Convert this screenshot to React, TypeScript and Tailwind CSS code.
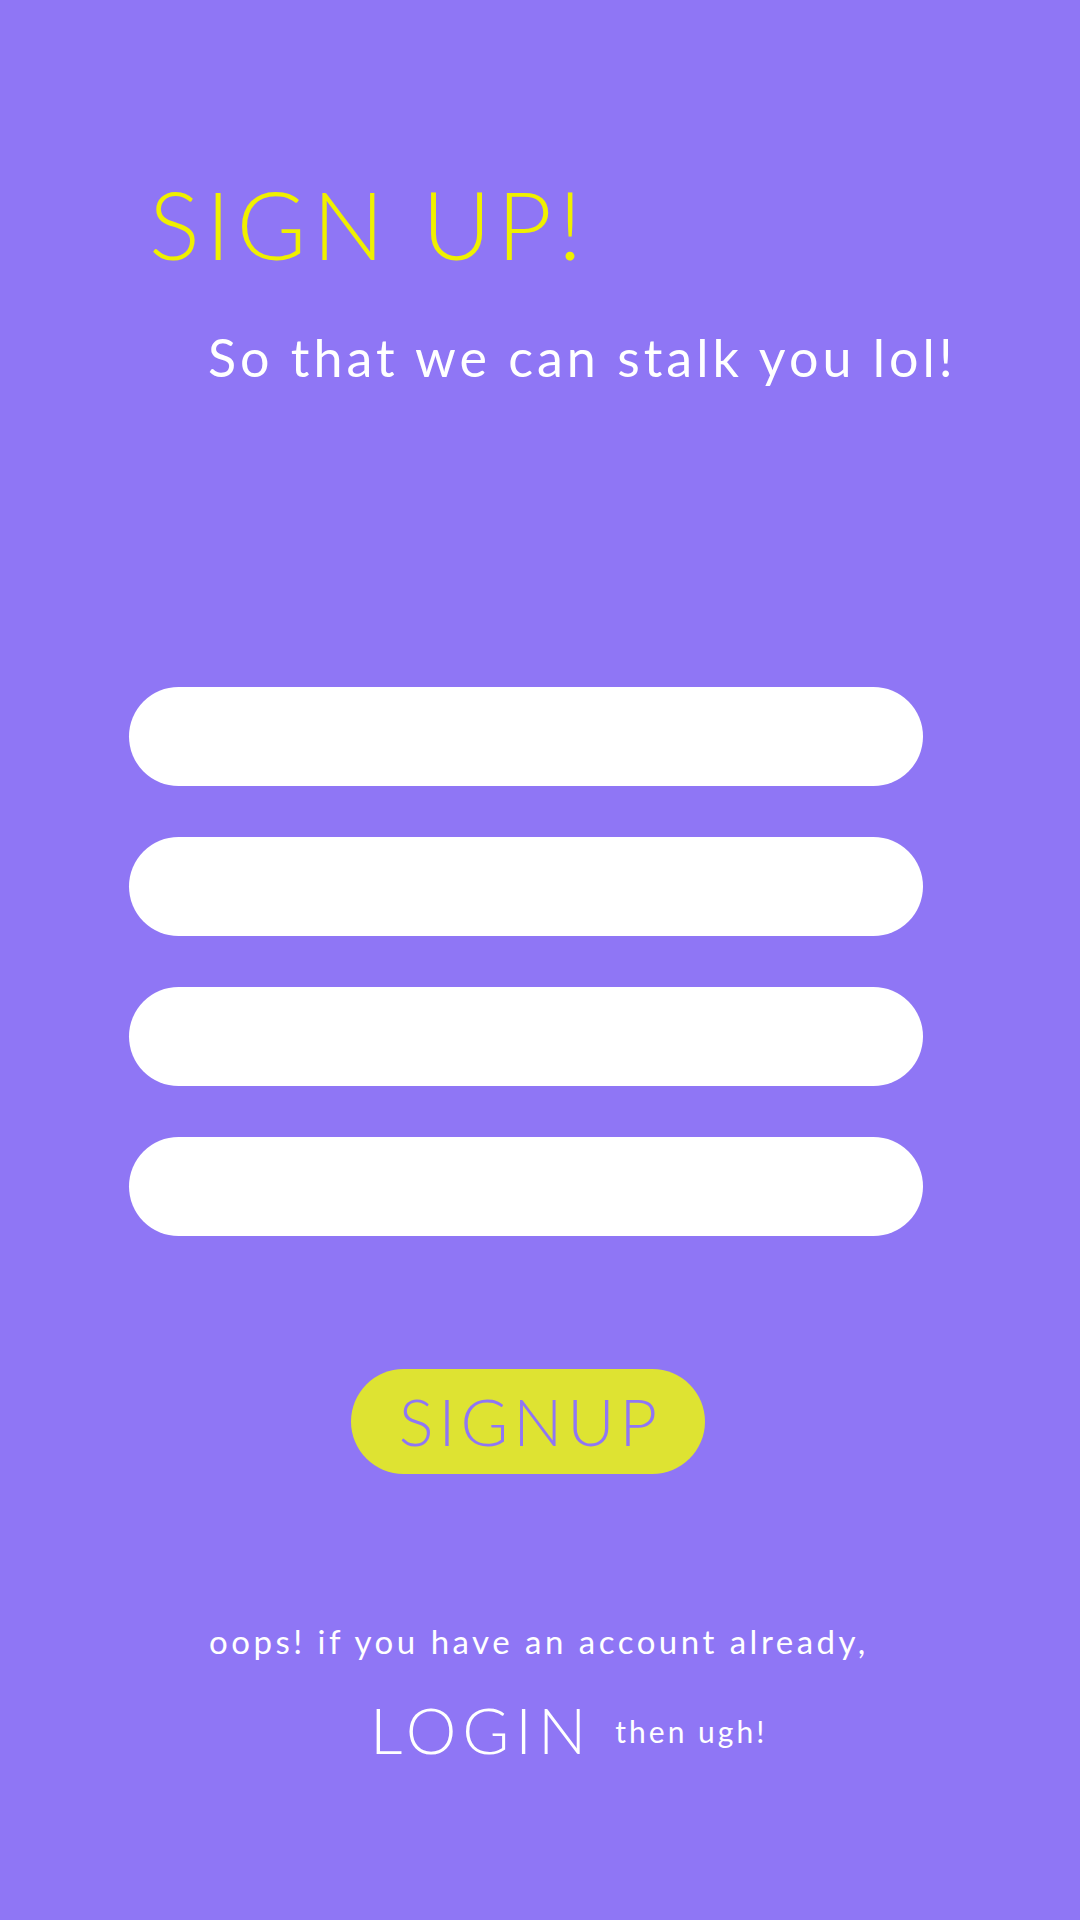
export default function App() {
  return (
    <div className="w-[1080px] h-[1920px] bg-[#8f76f5] flex flex-col font-['Lato',sans-serif] overflow-hidden">
      <h1 className="mt-[176px] ml-[149px] text-[95px] leading-none font-light text-[#f0f000] tracking-[6px]">SIGN UP!</h1>
      <p className="mt-[60px] ml-[208px] text-[52px] leading-none text-white tracking-[4px]">So that we can stalk you lol!</p>
      <div className="mt-[304px] ml-[129px] w-[794px] flex flex-col gap-[51px]">
        <input className="h-[99px] rounded-full bg-white outline-none" />
        <input className="h-[99px] rounded-full bg-white outline-none" />
        <input className="h-[99px] rounded-full bg-white outline-none" />
        <input className="h-[99px] rounded-full bg-white outline-none" />
      </div>
      <div className="mt-[133px] ml-[351px] w-[354px] h-[105px] rounded-full bg-[#dee332] flex items-center justify-center">
        <span className="text-[65px] leading-none text-[#8f76f5] font-light tracking-[5px] pl-[5px]">SIGNUP</span>
      </div>
      <p className="mt-[151px] ml-[209px] text-[33px] leading-none text-white tracking-[3.5px]">oops! if you have an account already,</p>
      <div className="mt-[40px] ml-[370px] flex items-end gap-[23px]">
        <span className="text-[64px] leading-none text-white font-light tracking-[6px]">LOGIN</span>
        <span className="text-[30px] leading-none text-white mb-[16px] tracking-[3px]">then ugh!</span>
      </div>
    </div>
  );
}
